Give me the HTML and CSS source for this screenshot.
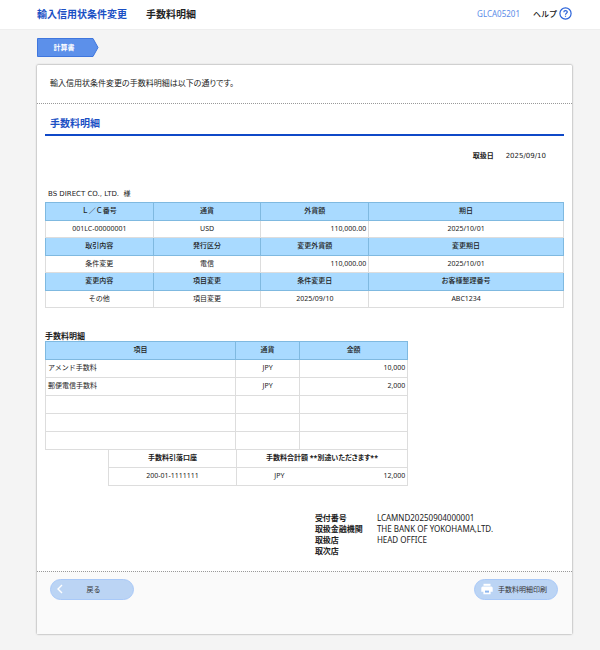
FILE: index.html
```html
<!DOCTYPE html>
<html lang="ja">
<head>
    <meta charset="UTF-8">
    <meta name="viewport" content="width=device-width, initial-scale=1.0">
    <title>輸入信用状条件変更 手数料明細</title>
    <link rel="stylesheet" href="styles.css">
</head>
<body>

<header class="page-header">
    <h1>輸入信用状条件変更</h1>
    <span class="page-name">手数料明細</span>
    <span class="screen-id">GLCA05201</span>
    <a class="help" href="#">
        ヘルプ
        <svg width="13" height="13" viewBox="0 0 13 13" fill="none" stroke="#2b63d9">
            <circle cx="6.5" cy="6.5" r="5.6" stroke-width="1.2"/>
            <path d="M4.8 5.2C4.8 3 8.3 3 8.3 5.1C8.3 6.3 6.5 6.3 6.5 7.7M6.5 8.7V9.8" stroke-width="1.2"/>
        </svg>
    </a>
</header>

<main>
    <div class="step">
        <svg width="62" height="19" viewBox="0 0 62 19">
            <path d="M0.5 0.5H56L61 9.5L56 18.5H0.5Z" fill="#5c90ea" stroke="#3f76dd"/>
        </svg>
        <span>計算書</span>
    </div>

    <div class="card">
        <p class="lead">輸入信用状条件変更の手数料明細は以下の通りです。</p>

        <section class="detail">
            <h2>手数料明細</h2>

            <dl class="date">
                <dt>取扱日</dt>
                <dd>2025/09/10</dd>
            </dl>

            <p class="customer">BS DIRECT CO., LTD.&nbsp; 様</p>

            <!-- 取引内容 -->
            <table class="lc-table">
                <tr><th>Ｌ／Ｃ番号</th><th>通貨</th><th>外貨額</th><th class="wide">期日</th></tr>
                <tr><td>001LC-00000001</td><td>USD</td><td class="num">110,000.00</td><td>2025/10/01</td></tr>
                <tr><th>取引内容</th><th>発行区分</th><th>変更外貨額</th><th>変更期日</th></tr>
                <tr><td>条件変更</td><td>電信</td><td class="num">110,000.00</td><td>2025/10/01</td></tr>
                <tr><th>変更内容</th><th>項目変更</th><th>条件変更日</th><th>お客様整理番号</th></tr>
                <tr><td>その他</td><td>項目変更</td><td>2025/09/10</td><td>ABC1234</td></tr>
            </table>

            <!-- 手数料 -->
            <div class="fees">
                <h3>手数料明細</h3>
                <table class="fee-table">
                    <tr><th class="item">項目</th><th class="currency">通貨</th><th>金額</th></tr>
                    <tr><td class="name">アメンド手数料</td><td>JPY</td><td class="num">10,000</td></tr>
                    <tr><td class="name">郵便電信手数料</td><td>JPY</td><td class="num">2,000</td></tr>
                    <tr><td></td><td></td><td></td></tr>
                    <tr><td></td><td></td><td></td></tr>
                    <tr><td></td><td></td><td></td></tr>
                </table>
                <table class="total-table">
                    <tr><th class="account">手数料引落口座</th><th colspan="2">手数料合計額 **別途いただきます**</th></tr>
                    <tr><td>200-01-1111111</td><td class="total-currency">JPY</td><td class="num total">12,000</td></tr>
                </table>
            </div>

            <dl class="receipt">
                <dt>受付番号</dt>
                <dd>LCAMND20250904000001</dd>
                <dt>取扱金融機関</dt>
                <dd>THE BANK OF YOKOHAMA,LTD.</dd>
                <dt>取扱店</dt>
                <dd>HEAD OFFICE</dd>
                <dt>取次店</dt>
                <dd></dd>
            </dl>
        </section>

        <div class="buttons">
            <button type="button" class="back">
                <svg width="6" height="10" viewBox="0 0 6 10" fill="none" stroke="#ffffff" stroke-width="1.4">
                    <path d="M5 1L1 5L5 9"/>
                </svg>
                <span>戻る</span>
            </button>
            <button type="button" class="print">
                <svg width="12" height="12" viewBox="0 0 12 12" fill="#ffffff">
                    <path d="M2.5 0.8H9.5V2.8H2.5Z"/>
                    <path d="M1.8 3.5H10.2Q11.7 3.5 11.7 5V8.8H9.6V11.2H2.4V8.8H0.3V5Q0.3 3.5 1.8 3.5Z"/>
                    <path d="M4 7.6H8V9.6H4Z" fill="#8db6ee"/>
                </svg>
                <span>手数料明細印刷</span>
            </button>
        </div>
    </div>
</main>

</body>
</html>
```
FILE: styles.css
```css
* {
    box-sizing: border-box;
}

body {
    margin: 0;
    background-color: #f4f4f4;
    color: #222222;
    font-family: "Noto Sans", "Noto Sans CJK JP", sans-serif;
    font-size: 8px;
    line-height: 12px;
}

h1, h2, h3, p, dl, dd {
    margin: 0;
}

/* ヘッダー */
.page-header {
    display: flex;
    align-items: center;
    height: 30px;
    padding: 0 28px 2px 37px;
    background-color: #ffffff;
    border-bottom: 1px solid #eeeeee;
}

h1 {
    margin-right: 19px;
    color: #1a4fc4;
    font-size: 10px;
}

.page-name {
    font-size: 10px;
    font-weight: bold;
}

.screen-id {
    margin-left: auto;
    color: #5b8ce8;
}

.help {
    display: flex;
    align-items: center;
    gap: 2px;
    margin-left: 13px;
    color: #111111;
    font-weight: 500;
    text-decoration: none;
}

main {
    padding: 8px 28px 16px 37px;
}

/* ステップ */
.step {
    display: grid;
    width: 62px;
    height: 19px;
    align-items: center;
    color: #ffffff;
    font-size: 7px;
    font-weight: bold;
}

.step svg,
.step span {
    grid-area: 1 / 1;
}

.step span {
    padding-right: 8px;
    text-align: center;
}

.card {
    margin-top: 8px;
    background-color: #ffffff;
    border-radius: 1px;
    box-shadow: 0 0 2px rgba(0, 0, 0, 0.55);
}

.lead {
    padding: 12px 13px 14px;
    border-bottom: 1px dotted #999999;
    font-feature-settings: "palt";
}

.detail {
    padding: 11px 8px 15px;
}

h2 {
    padding: 0 5px 3px;
    border-bottom: 2px solid #0f49c8;
    color: #1a4fc4;
    font-size: 10px;
    line-height: 16px;
}

.date {
    display: flex;
    justify-content: flex-end;
    gap: 12px;
    padding: 14px 18px 26px 0;
}

.date dt {
    font-size: 7px;
    font-weight: bold;
}

.date dd,
.customer {
    font-family: "DejaVu Sans", "Noto Sans CJK JP", sans-serif;
    font-size: 7px;
}

.customer {
    padding: 0 3px 2px;
}

/* 表 */
table {
    width: 100%;
    border-collapse: collapse;
    table-layout: fixed;
    font-size: 7px;
    line-height: 10px;
}

th, td {
    height: 18px;
    padding: 0 2px 1px;
    border: 1px solid #dddddd;
    text-align: center;
}

th {
    background-color: #a9daff;
    border-color: #7fb9e0;
    font-weight: 500;
}

td.num {
    text-align: right;
}

td.name {
    text-align: left;
}

.lc-table td {
    height: 17px;
}

.lc-table .wide {
    width: 37.6%;
}

.fees {
    width: 70%;
    margin-top: 22px;
}

h3 {
    font-size: 8px;
    line-height: 11px;
}

.fee-table .item {
    width: 52.5%;
}

.fee-table .currency {
    width: 17.6%;
}

.total-table {
    width: 82.6%;
    margin: -1px 0 0 auto;
}

.total-table th {
    background-color: #ffffff;
    border-color: #dddddd;
    font-weight: bold;
    font-feature-settings: "palt";
}

.total-table .account {
    width: 42.6%;
}

.total-table .total-currency {
    border-right: none;
}

.total-table .total {
    border-left: none;
}

.receipt {
    display: grid;
    grid-template-columns: 62px 1fr;
    grid-auto-rows: 11px;
    margin: 26px 0 0 52%;
    line-height: 11px;
}

.receipt dt {
    font-weight: bold;
}

/* ボタン */
.buttons {
    display: flex;
    justify-content: space-between;
    padding: 7px 14px 34px 13px;
    background-color: #fafafa;
    border-top: 1px dotted #999999;
}

button {
    display: flex;
    align-items: center;
    width: 84px;
    height: 21px;
    padding: 0 6px 2px;
    background-color: #bbd4f4;
    border: 1px solid #a9c9f8;
    border-radius: 11px;
    color: #333333;
    font-family: inherit;
    font-size: 7px;
    cursor: pointer;
}

.back span {
    flex: 1;
    padding-right: 3px;
    text-align: center;
}

.print {
    gap: 5px;
}
```
